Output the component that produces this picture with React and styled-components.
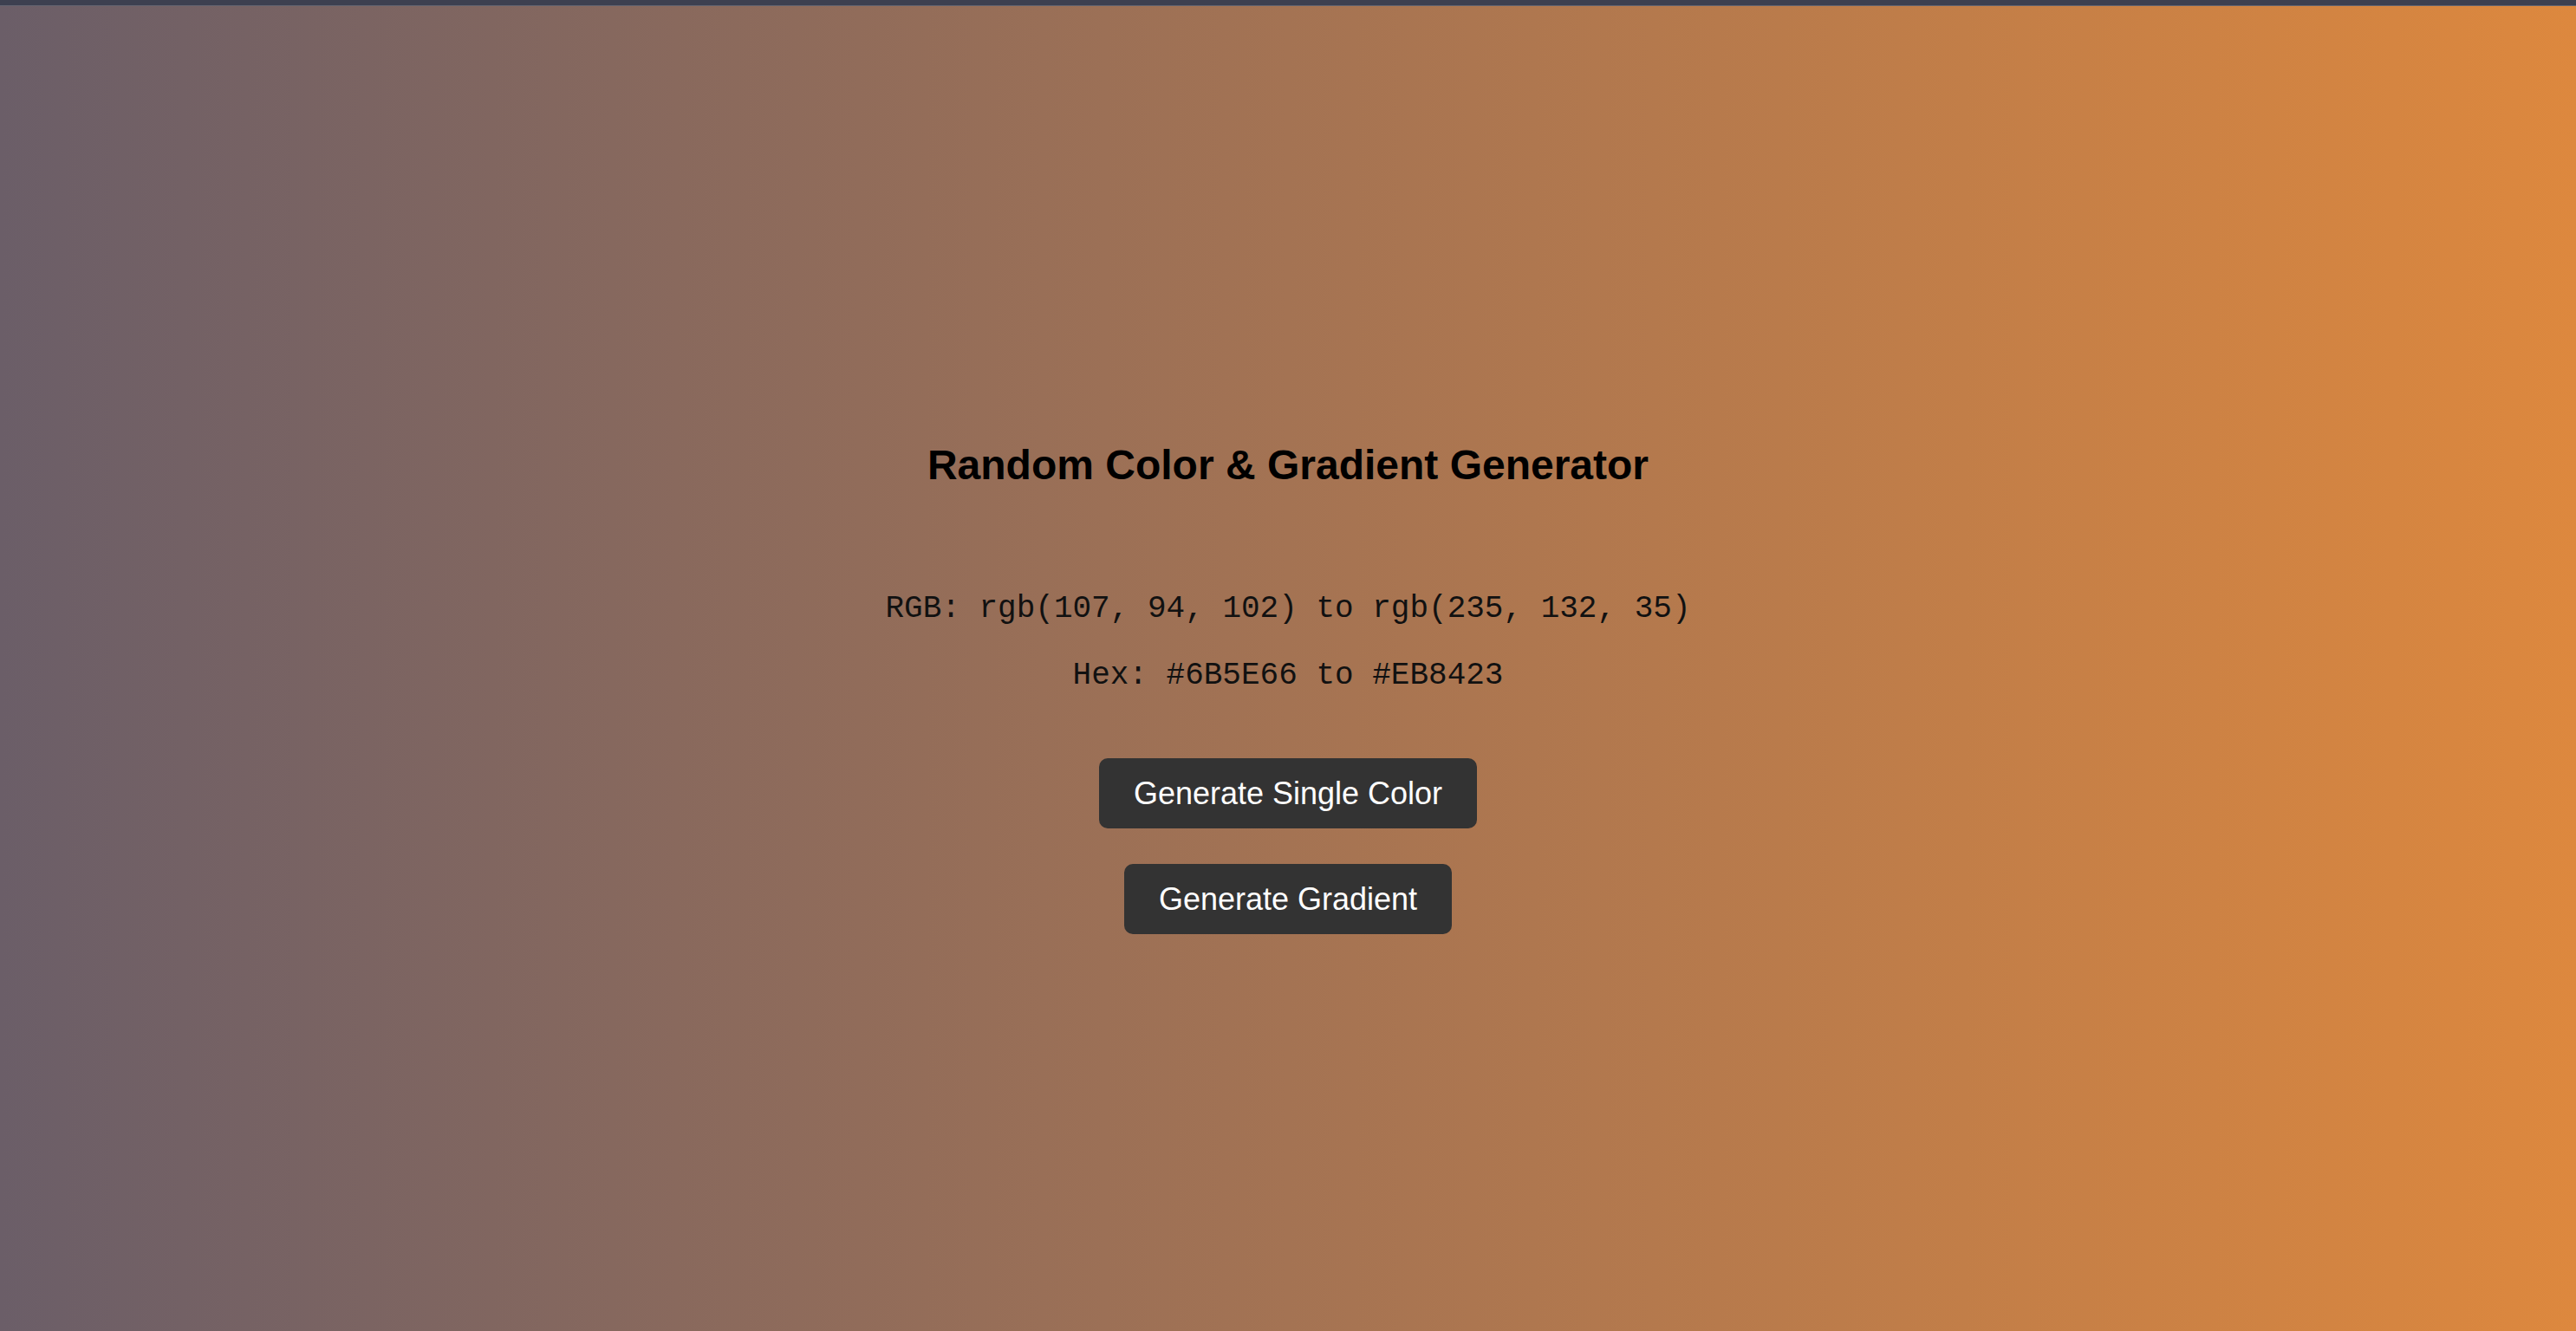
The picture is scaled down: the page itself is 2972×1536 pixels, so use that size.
import styled, { createGlobalStyle } from "styled-components"

// Styles globaux de la page
const GlobalStyle = createGlobalStyle`
  html, body {
    margin: 0;
    padding: 0;
  }
  body {
    font-family: "Liberation Sans", Arial, sans-serif;
  }
`

// Fond dégradé qui occupe tout l'écran
const Page = styled.div`
  min-height: 100vh;
  display: flex;
  flex-direction: column;
  background: linear-gradient(to right, #6b5e68, #dd883e);
`

// Bande sombre en haut de la fenêtre
const TopBar = styled.div`
  height: 6px;
  background-color: #3d4050;
  border-bottom: 1px solid #62636f;
`

// Conteneur centré du contenu
const Main = styled.main`
  flex: 1;
  display: flex;
  flex-direction: column;
  align-items: center;
  padding-top: 502px;
`

// Titre principal
const Title = styled.h1`
  margin: 0 0 118px;
  font-family: "Liberation Sans", Arial, sans-serif;
  font-size: 48px;
  line-height: 56px;
  font-weight: 700;
  color: #000;
`

// Ligne de texte en police à chasse fixe
const CodeLine = styled.p`
  margin: 0 0 ${(props) => props.$gap}px;
  font-family: "Liberation Mono", "Courier New", monospace;
  font-size: 36px;
  line-height: 40px;
  color: #111;
  white-space: pre;
`

// Bouton sombre
const Button = styled.button`
  margin-bottom: ${(props) => props.$gap}px;
  padding: 20px 40px;
  border: none;
  border-radius: 10px;
  background-color: #333;
  color: #fff;
  font-family: "Liberation Sans", Arial, sans-serif;
  font-size: 36px;
  line-height: 41px;
  cursor: pointer;
`

// Composant principal
export default function App() {
  const from = { r: 107, g: 94, b: 102, hex: "#6B5E66" }
  const to = { r: 235, g: 132, b: 35, hex: "#EB8423" }

  return (
    <>
      <GlobalStyle />
      <Page>
        <TopBar />
        <Main>
          <Title>Random Color &amp; Gradient Generator</Title>
          <CodeLine $gap={37}>
            RGB: rgb({from.r}, {from.g}, {from.b}) to rgb({to.r}, {to.g}, {to.b})
          </CodeLine>
          <CodeLine $gap={75}>
            Hex: {from.hex} to {to.hex}
          </CodeLine>
          <Button $gap={41}>Generate Single Color</Button>
          <Button $gap={0}>Generate Gradient</Button>
        </Main>
      </Page>
    </>
  )
}
